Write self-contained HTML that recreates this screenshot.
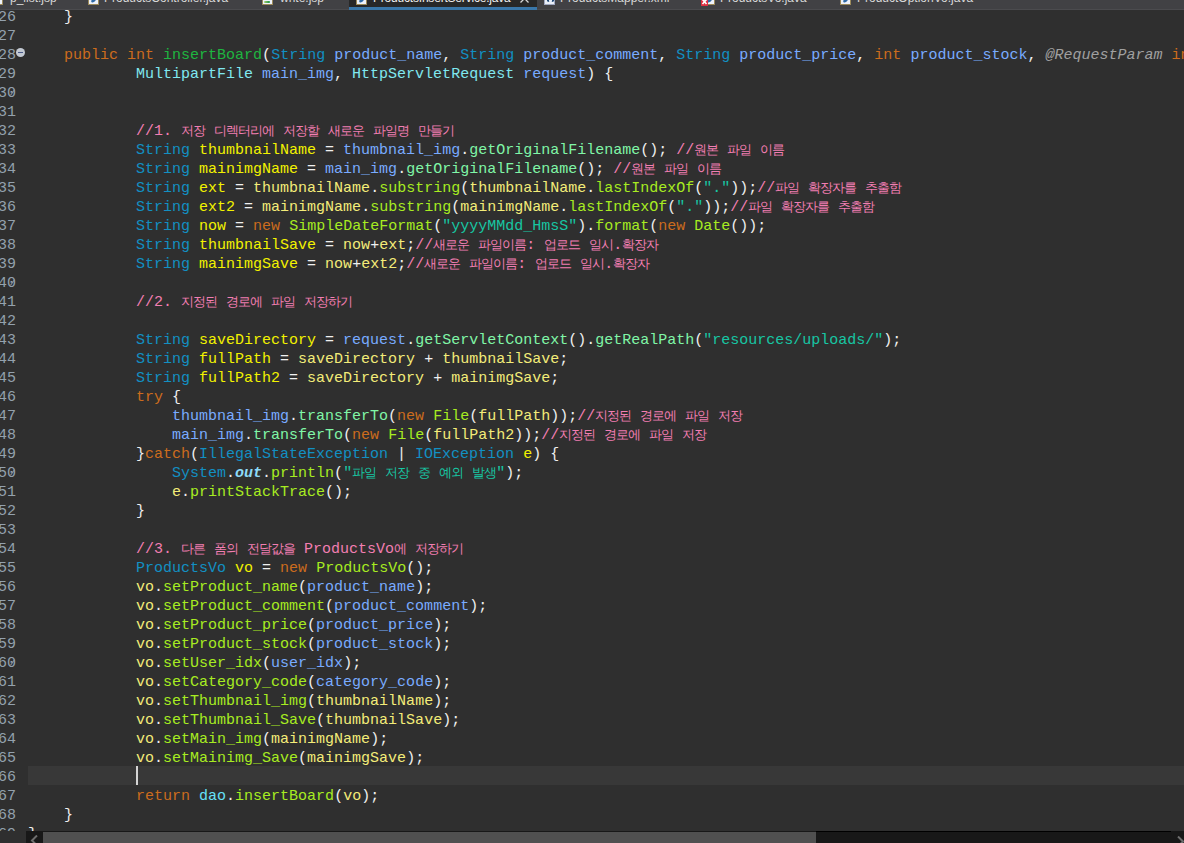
<!DOCTYPE html>
<html><head><meta charset="utf-8"><style>
html,body{margin:0;padding:0;}
body{width:1184px;height:843px;overflow:hidden;background:#2f2f2f;position:relative;font-family:"Liberation Mono",monospace;}
#ed{position:absolute;left:0;top:0;width:1184px;height:831px;overflow:hidden;}
.cur{position:absolute;left:28px;top:766px;width:1156px;height:19px;background:#383838;}
.ln{position:absolute;left:-2px;padding-top:2px;width:18px;text-align:right;font-size:15px;line-height:19px;height:19px;color:#93a1ad;white-space:pre;}
.cl{position:absolute;left:28px;padding-top:2px;font-size:15px;line-height:19px;height:19px;color:#f0f0f0;white-space:pre;}
.caret{position:absolute;left:136px;top:766px;width:2px;height:19px;background:#d4d4d4;}
.ko{font-size:13px;letter-spacing:-1px;}
.k{color:#cc6c1d}
.c{color:#1290c3}
.i{color:#80e8f0}
.md{color:#1eb540}
.p{color:#79abff}
.ld{color:#f2f200}
.lv{color:#f3ec79}
.m{color:#a7ec21}
.am{color:#80f6a7}
.s{color:#17c6a3}
.cm{color:#f27eb2}
.an{color:#a0a0a0;font-style:italic}
.f{color:#66e1f8}
.sf{color:#8ddaf8;font-weight:bold;font-style:italic}
#tabs{position:absolute;left:0;top:0;width:1184px;height:10px;background:linear-gradient(#414144 0,#414144 9px,#4b4b4e 9px);overflow:hidden;font-family:"Liberation Sans",sans-serif;}
#tabs .tabact{position:absolute;left:349px;top:0;width:188px;height:10px;background:#282828;}
#tabs .blue{position:absolute;left:349px;top:7px;width:188px;height:3px;background:#3a77a9;}
#tabs .tt{position:absolute;top:-8px;font-size:12px;line-height:12px;color:#d8d8d8;white-space:pre;}
#tabs .tt.act{color:#f0f0f0}
#tabs .ic{position:absolute;top:-7px;width:9px;height:10px;background:#eef2fa;border:1px solid #9c8a5a;}
#tabs .ic.jv::after{content:"";position:absolute;left:2px;top:5px;width:5px;height:3px;background:#2f6aa6;border-radius:50%;transform:rotate(-35deg);}
#tabs .ic.jsp::after{content:"";position:absolute;left:1px;top:7px;width:6px;height:2px;border-radius:1px;background:linear-gradient(90deg,#a8d070,#109040);}
#tabs .ic.xml{background:#e8eef8;border-color:#a0a8c0}
#tabs .ic.xml::after{content:"";position:absolute;left:2px;top:5px;width:3px;height:3px;border-left:2px solid #204a78;border-right:2px solid #204a78;border-radius:0 0 40% 40%;}
#tabs .err{position:absolute;left:701px;top:-1px;width:7px;height:7px;background:#dc2f42;}
#fold{position:absolute;left:16px;top:48px;width:9px;height:9px;border-radius:50%;background:radial-gradient(circle at 50% 50%,#bcc4cc 0,#c4cad4 60%,#b0b8c4 100%);}
#fold div{position:absolute;left:2px;top:4px;width:5px;height:1px;background:#4a5888;}
#hsb{position:absolute;left:26px;top:831px;width:1158px;height:12px;background:#181818;overflow:hidden}
#hsb .tl{position:absolute;left:790px;top:0;width:355px;height:1px;background:#000}
#hsb .thumb{position:absolute;left:17px;top:1px;width:773px;height:11px;background:#505050;}

.z{position:relative}.z::after{content:"";position:absolute;left:4.5px;top:4px;width:1px;height:7px;background:#93a1ad;transform:rotate(35deg);opacity:.8}

</style></head><body>
<div id="ed">
<div class="cur"></div>
<div class="ln" style="top:6px">26</div><div class="cl" style="top:6px">    }</div><div class="ln" style="top:25px">27</div><div class="ln" style="top:44px">28</div><div class="cl" style="top:44px">    <span class="k">public</span> <span class="k">int</span> <span class="md">insertBoard</span>(<span class="c">String</span> <span class="p">product_name</span>, <span class="c">String</span> <span class="p">product_comment</span>, <span class="c">String</span> <span class="p">product_price</span>, <span class="k">int</span> <span class="p">product_stock</span>, <span class="an">@RequestParam</span> <span class="k">int</span> <span class="p">user_idx</span>, <span class="an">@RequestParam</span> <span class="k">int</span> <span class="p">category_code</span>,</div><div class="ln" style="top:63px">29</div><div class="cl" style="top:63px">            <span class="i">MultipartFile</span> <span class="p">main_img</span>, <span class="i">HttpServletRequest</span> <span class="p">request</span>) {</div><div class="ln" style="top:82px">3<span class="z">0</span></div><div class="ln" style="top:101px">31</div><div class="ln" style="top:120px">32</div><div class="cl" style="top:120px">            <span class="cm">//1. <span class="ko">저장</span> <span class="ko">디렉터리에</span> <span class="ko">저장할</span> <span class="ko">새로운</span> <span class="ko">파일명</span> <span class="ko">만들기</span></span></div><div class="ln" style="top:139px">33</div><div class="cl" style="top:139px">            <span class="c">String</span> <span class="ld">thumbnailName</span> = <span class="p">thumbnail_img</span>.<span class="am">getOriginalFilename</span>(); <span class="cm">//<span class="ko">원본</span> <span class="ko">파일</span> <span class="ko">이름</span></span></div><div class="ln" style="top:158px">34</div><div class="cl" style="top:158px">            <span class="c">String</span> <span class="ld">mainimgName</span> = <span class="p">main_img</span>.<span class="am">getOriginalFilename</span>(); <span class="cm">//<span class="ko">원본</span> <span class="ko">파일</span> <span class="ko">이름</span></span></div><div class="ln" style="top:177px">35</div><div class="cl" style="top:177px">            <span class="c">String</span> <span class="ld">ext</span> = <span class="lv">thumbnailName</span>.<span class="m">substring</span>(<span class="lv">thumbnailName</span>.<span class="m">lastIndexOf</span>(<span class="s">&quot;.&quot;</span>));<span class="cm">//<span class="ko">파일</span> <span class="ko">확장자를</span> <span class="ko">추출함</span></span></div><div class="ln" style="top:196px">36</div><div class="cl" style="top:196px">            <span class="c">String</span> <span class="ld">ext2</span> = <span class="lv">mainimgName</span>.<span class="m">substring</span>(<span class="lv">mainimgName</span>.<span class="m">lastIndexOf</span>(<span class="s">&quot;.&quot;</span>));<span class="cm">//<span class="ko">파일</span> <span class="ko">확장자를</span> <span class="ko">추출함</span></span></div><div class="ln" style="top:215px">37</div><div class="cl" style="top:215px">            <span class="c">String</span> <span class="ld">now</span> = <span class="k">new</span> <span class="m">SimpleDateFormat</span>(<span class="s">&quot;yyyyMMdd_HmsS&quot;</span>).<span class="m">format</span>(<span class="k">new</span> <span class="m">Date</span>());</div><div class="ln" style="top:234px">38</div><div class="cl" style="top:234px">            <span class="c">String</span> <span class="ld">thumbnailSave</span> = <span class="lv">now</span>+<span class="lv">ext</span>;<span class="cm">//<span class="ko">새로운</span> <span class="ko">파일이름</span>: <span class="ko">업로드</span> <span class="ko">일시</span>.<span class="ko">확장자</span></span></div><div class="ln" style="top:253px">39</div><div class="cl" style="top:253px">            <span class="c">String</span> <span class="ld">mainimgSave</span> = <span class="lv">now</span>+<span class="lv">ext2</span>;<span class="cm">//<span class="ko">새로운</span> <span class="ko">파일이름</span>: <span class="ko">업로드</span> <span class="ko">일시</span>.<span class="ko">확장자</span></span></div><div class="ln" style="top:272px">4<span class="z">0</span></div><div class="ln" style="top:291px">41</div><div class="cl" style="top:291px">            <span class="cm">//2. <span class="ko">지정된</span> <span class="ko">경로에</span> <span class="ko">파일</span> <span class="ko">저장하기</span></span></div><div class="ln" style="top:310px">42</div><div class="ln" style="top:329px">43</div><div class="cl" style="top:329px">            <span class="c">String</span> <span class="ld">saveDirectory</span> = <span class="p">request</span>.<span class="am">getServletContext</span>().<span class="am">getRealPath</span>(<span class="s">&quot;resources/uploads/&quot;</span>);</div><div class="ln" style="top:348px">44</div><div class="cl" style="top:348px">            <span class="c">String</span> <span class="ld">fullPath</span> = <span class="lv">saveDirectory</span> + <span class="lv">thumbnailSave</span>;</div><div class="ln" style="top:367px">45</div><div class="cl" style="top:367px">            <span class="c">String</span> <span class="ld">fullPath2</span> = <span class="lv">saveDirectory</span> + <span class="lv">mainimgSave</span>;</div><div class="ln" style="top:386px">46</div><div class="cl" style="top:386px">            <span class="k">try</span> {</div><div class="ln" style="top:405px">47</div><div class="cl" style="top:405px">                <span class="p">thumbnail_img</span>.<span class="am">transferTo</span>(<span class="k">new</span> <span class="m">File</span>(<span class="lv">fullPath</span>));<span class="cm">//<span class="ko">지정된</span> <span class="ko">경로에</span> <span class="ko">파일</span> <span class="ko">저장</span></span></div><div class="ln" style="top:424px">48</div><div class="cl" style="top:424px">                <span class="p">main_img</span>.<span class="am">transferTo</span>(<span class="k">new</span> <span class="m">File</span>(<span class="lv">fullPath2</span>));<span class="cm">//<span class="ko">지정된</span> <span class="ko">경로에</span> <span class="ko">파일</span> <span class="ko">저장</span></span></div><div class="ln" style="top:443px">49</div><div class="cl" style="top:443px">            }<span class="k">catch</span>(<span class="c">IllegalStateException</span> | <span class="c">IOException</span> <span class="ld">e</span>) {</div><div class="ln" style="top:462px">5<span class="z">0</span></div><div class="cl" style="top:462px">                <span class="c">System</span>.<span class="sf">out</span>.<span class="m">println</span>(<span class="s">&quot;<span class="ko">파일</span> <span class="ko">저장</span> <span class="ko">중</span> <span class="ko">예외</span> <span class="ko">발생</span>&quot;</span>);</div><div class="ln" style="top:481px">51</div><div class="cl" style="top:481px">                <span class="lv">e</span>.<span class="m">printStackTrace</span>();</div><div class="ln" style="top:500px">52</div><div class="cl" style="top:500px">            }</div><div class="ln" style="top:519px">53</div><div class="ln" style="top:538px">54</div><div class="cl" style="top:538px">            <span class="cm">//3. <span class="ko">다른</span> <span class="ko">폼의</span> <span class="ko">전달값을</span> ProductsVo<span class="ko">에</span> <span class="ko">저장하기</span></span></div><div class="ln" style="top:557px">55</div><div class="cl" style="top:557px">            <span class="c">ProductsVo</span> <span class="ld">vo</span> = <span class="k">new</span> <span class="m">ProductsVo</span>();</div><div class="ln" style="top:576px">56</div><div class="cl" style="top:576px">            <span class="lv">vo</span>.<span class="m">setProduct_name</span>(<span class="p">product_name</span>);</div><div class="ln" style="top:595px">57</div><div class="cl" style="top:595px">            <span class="lv">vo</span>.<span class="m">setProduct_comment</span>(<span class="p">product_comment</span>);</div><div class="ln" style="top:614px">58</div><div class="cl" style="top:614px">            <span class="lv">vo</span>.<span class="m">setProduct_price</span>(<span class="p">product_price</span>);</div><div class="ln" style="top:633px">59</div><div class="cl" style="top:633px">            <span class="lv">vo</span>.<span class="m">setProduct_stock</span>(<span class="p">product_stock</span>);</div><div class="ln" style="top:652px">6<span class="z">0</span></div><div class="cl" style="top:652px">            <span class="lv">vo</span>.<span class="m">setUser_idx</span>(<span class="p">user_idx</span>);</div><div class="ln" style="top:671px">61</div><div class="cl" style="top:671px">            <span class="lv">vo</span>.<span class="m">setCategory_code</span>(<span class="p">category_code</span>);</div><div class="ln" style="top:690px">62</div><div class="cl" style="top:690px">            <span class="lv">vo</span>.<span class="m">setThumbnail_img</span>(<span class="lv">thumbnailName</span>);</div><div class="ln" style="top:709px">63</div><div class="cl" style="top:709px">            <span class="lv">vo</span>.<span class="m">setThumbnail_Save</span>(<span class="lv">thumbnailSave</span>);</div><div class="ln" style="top:728px">64</div><div class="cl" style="top:728px">            <span class="lv">vo</span>.<span class="m">setMain_img</span>(<span class="lv">mainimgName</span>);</div><div class="ln" style="top:747px">65</div><div class="cl" style="top:747px">            <span class="lv">vo</span>.<span class="m">setMainimg_Save</span>(<span class="lv">mainimgSave</span>);</div><div class="ln" style="top:766px">66</div><div class="ln" style="top:785px">67</div><div class="cl" style="top:785px">            <span class="k">return</span> <span class="f">dao</span>.<span class="m">insertBoard</span>(<span class="lv">vo</span>);</div><div class="ln" style="top:804px">68</div><div class="cl" style="top:804px">    }</div><div class="ln" style="top:823px">69</div><div class="cl" style="top:823px">}</div>
<div class="caret"></div>
</div>
<div id="tabs">
  <div class="tabact"></div>
  <div class="blue"></div>
  <div class="ic jsp" style="left:-8px"></div><div class="tt" style="left:10px">p_list.jsp</div>
  <div class="ic jv" style="left:88px"></div><div class="tt" style="left:104px">ProductsController.java</div>
  <div class="ic jsp" style="left:262px"></div><div class="tt" style="left:280px">write.jsp</div>
  <div class="ic jv" style="left:356px"></div><div class="tt act" style="left:373px;letter-spacing:-0.2px">ProductsInsertService.java</div>
  <svg class="x" style="position:absolute;left:519px;top:-6px" width="12" height="10" viewBox="0 0 12 10"><path d="M1.5 0.5 L9.5 8.5 M9.5 0.5 L1.5 8.5" stroke="#d8d8d8" stroke-width="1.3" fill="none"/></svg>
  <div class="ic xml" style="left:544px"></div><div class="tt" style="left:560px">ProductsMapper.xml</div>
  <div class="ic jv" style="left:704px"></div><div class="err" style="left:701px"><svg width="7" height="7" style="position:absolute;left:0;top:0"><path d="M1.5 0.5 L5.5 5 M5.5 0.5 L1.5 5" stroke="#fff" stroke-width="1.6"/></svg></div><div class="tt" style="left:720px">ProductsVo.java</div>
  <div class="ic jv" style="left:840px"></div><div class="tt" style="left:857px">ProductOptionVo.java</div>
</div>
<div id="fold"><div></div></div>
<div id="hsb"><div class="thumb"></div><div class="tl"></div><svg style="position:absolute;left:4px;top:4px" width="9" height="10" viewBox="0 0 9 10"><path d="M7 0.5 L2 5.5 L7 10.5" stroke="#6e6e6e" stroke-width="2" fill="none"/></svg><svg style="position:absolute;left:1150px;top:5px" width="9" height="10" viewBox="0 0 9 10"><path d="M2 0.5 L7 5.5 L2 10.5" stroke="#6e6e6e" stroke-width="2" fill="none"/></svg></div>

</body></html>
